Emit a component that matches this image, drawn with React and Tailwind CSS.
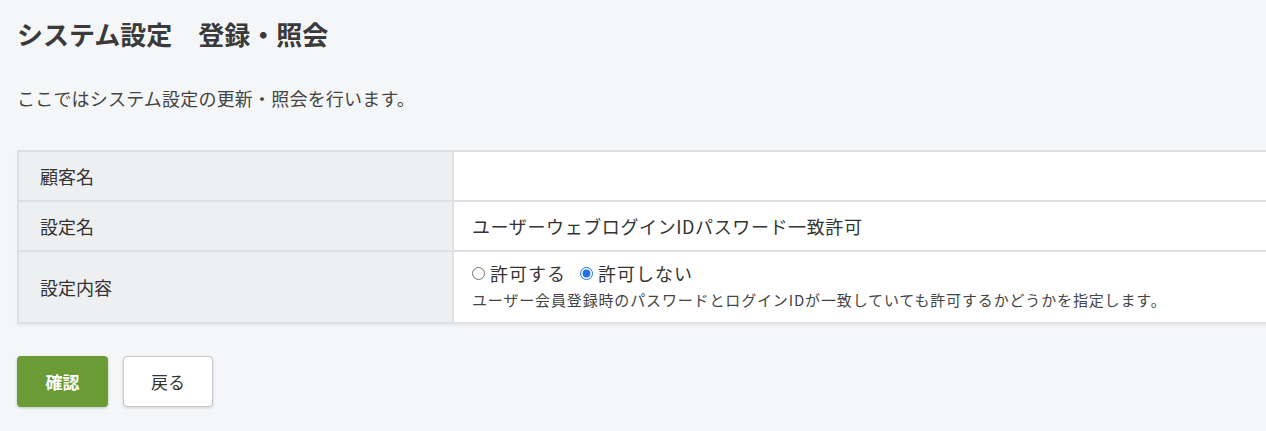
const FONT = { fontFamily: '"Noto Sans CJK JP", "Noto Sans", sans-serif' };

const ROWS = [
  { label: '顧客名', value: '' },
  { label: '設定名', value: 'ユーザーウェブログインIDパスワード一致許可' },
];

export default function App() {
  return (
    <div
      className="w-[1266px] h-[431px] overflow-hidden bg-[#f5f6f8] text-[#333] pl-[17px]"
      style={FONT}
    >
      <h1 className="pt-[14px] text-[26px] leading-[40px] font-bold text-[#3a3a3a] whitespace-nowrap">
        システム設定　登録・照会
      </h1>
      <p className="mt-[32px] text-[18px] leading-[24px] tracking-[0.2px] text-[#444] whitespace-nowrap">
        ここではシステム設定の更新・照会を行います。
      </p>

      {/* Table */}
      <div className="mt-[40px] w-[1270px] border-2 border-[#dfe0e3] shadow-[0_2px_3px_rgba(0,0,0,0.05)]">
        {ROWS.map((row) => (
          <div
            key={row.label}
            className="grid grid-cols-[435px_1fr] h-[50px] border-b-2 border-[#dfe0e3]"
          >
            <div className="bg-[#eeeff1] border-r-2 border-[#dfe0e3] flex items-center pl-[21px] text-[18px]">
              {row.label}
            </div>
            <div className="bg-white flex items-center pl-[18px] text-[18px] tracking-[0.6px] whitespace-nowrap">
              {row.value}
            </div>
          </div>
        ))}
        <div className="grid grid-cols-[435px_1fr] h-[70px]">
          <div className="bg-[#eeeff1] border-r-2 border-[#dfe0e3] flex items-center pl-[21px] text-[18px]">
            設定内容
          </div>
          <div className="bg-white pl-[18px] pt-[9px] whitespace-nowrap">
            <div className="flex items-center h-[24px] text-[18px]">
              <label className="flex items-center gap-[5px]">
                <input type="radio" name="allow" className="w-[13px] h-[13px] m-0 accent-[#1a73e8]" />
                <span className="tracking-[1px]">許可する</span>
              </label>
              <label className="flex items-center gap-[5px] ml-[14px]">
                <input
                  type="radio"
                  name="allow"
                  defaultChecked
                  className="w-[13px] h-[13px] m-0 accent-[#1a73e8]"
                />
                <span className="tracking-[1px]">許可しない</span>
              </label>
            </div>
            <p className="mt-[4px] text-[15px] leading-[22px] tracking-[0.85px] text-[#444]">
              ユーザー会員登録時のパスワードとログインIDが一致していても許可するかどうかを指定します。
            </p>
          </div>
        </div>
      </div>

      {/* Buttons */}
      <div className="mt-[32px] flex gap-[15px]">
        <button className="w-[91px] h-[51px] rounded-[4px] bg-[#6a9b34] text-white text-[17px] font-bold shadow-[0_1px_3px_rgba(0,0,0,0.2)]">
          確認
        </button>
        <button className="w-[90px] h-[51px] rounded-[4px] bg-white border border-[#c8c9cc] text-[#333] text-[17px] shadow-[0_1px_3px_rgba(0,0,0,0.15)]">
          戻る
        </button>
      </div>
    </div>
  );
}
